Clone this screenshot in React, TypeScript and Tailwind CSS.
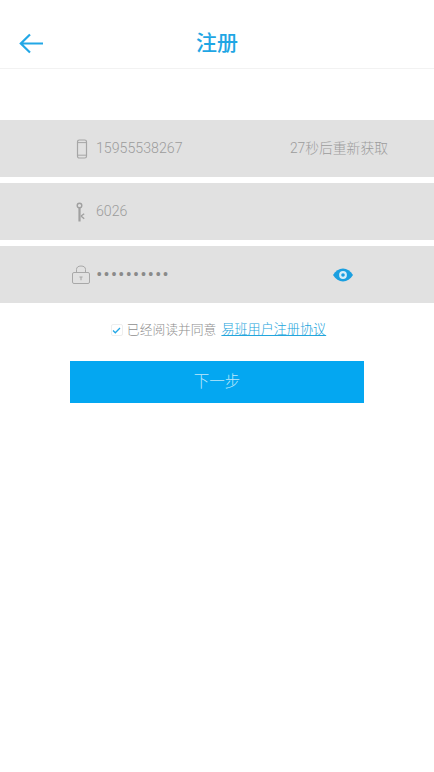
const font = { fontFamily: '"Roboto", "Noto Sans CJK SC", sans-serif' }

function PhoneIcon() {
  return (
    <svg className="ml-px" width="12" height="20" viewBox="0 0 12 20" fill="none" stroke="#a6a6a6">
      <rect x="1.500" y="1" width="9" height="18" rx="1.800" strokeWidth="1.200" />
      <path d="M1.500 3.600h9M1.500 16.200h9" strokeWidth="1" />
    </svg>
  )
}

function KeyIcon() {
  return (
    <svg width="10" height="20" viewBox="0 0 10 20" fill="none" stroke="#a0a0a0">
      <circle cx="3.500" cy="3.500" r="2.300" strokeWidth="1.400" />
      <path d="M3.500 6V19.500" strokeWidth="2.200" />
      <path d="M5 14l3.200-2.300M5 14l3.200 2.800" strokeWidth="1.400" />
    </svg>
  )
}

function LockIcon() {
  return (
    <svg width="18" height="19" viewBox="0 0 18 19" fill="none" stroke="#a8a8a8" strokeWidth="1">
      <path d="M4.500 7.500V4.500C4.500 2.400 6 1 9 1s4.500 1.400 4.500 3.500v3" />
      <rect x="0.500" y="7.500" width="17" height="11" rx="1.500" />
      <path d="M7.400 12h3.200M9 12v3.200" strokeWidth="1.100" />
    </svg>
  )
}

function EyeIcon() {
  return (
    <svg width="20" height="14" viewBox="0 0 20 14">
      <path d="M0 7C2.500 2.800 6 .5 10 .5S17.500 2.800 20 7c-2.500 4.200-6 6.500-10 6.500S2.500 11.200 0 7z" fill="#1a9fe0" />
      <circle cx="10" cy="7" r="3.900" fill="#d8edf8" />
      <circle cx="10" cy="7" r="1.800" fill="#1a9fe0" />
    </svg>
  )
}

function Row({ icon, children, right }: { icon: React.ReactNode; children: React.ReactNode; right?: React.ReactNode }) {
  return (
    <div className="flex h-[57px] items-center bg-[#e1e1e1]">
      <div className="flex w-[96px] shrink-0 justify-end pr-[6px]">
        <div className="flex w-[18px] justify-center">{icon}</div>
      </div>
      <div className="flex-1 text-[14.200px] font-light text-[#9c9c9c]">{children}</div>
      {right}
    </div>
  )
}

export default function App() {
  return (
    <div className="h-[772px] w-[434px] bg-white" style={font}>
      <header className="relative flex h-[69px] items-center justify-center border-b border-[#f2f2f2] pt-[19px]">
        <svg className="absolute left-[19px] top-[33px]" width="25" height="21" viewBox="0 0 25 21" fill="none" stroke="#22a7e6" strokeWidth="2.200">
          <path d="M24 10.500H2M11 1.500l-9.200 9 9.200 9" />
        </svg>
        <h1 className="text-[21px] font-medium leading-none text-[#1fa6e4]">注册</h1>
      </header>

      <div className="mt-[51px] flex flex-col gap-[6px]">
        <Row
          icon={<PhoneIcon />}
          right={<span className="pr-[46px] text-[13.800px] font-light text-[#9c9c9c]">27秒后重新获取</span>}
        >
          15955538267
        </Row>
        <Row icon={<KeyIcon />}>6026</Row>
        <Row
          icon={<LockIcon />}
          right={
            <span className="pr-[81px]">
              <EyeIcon />
            </span>
          }
        >
          <span className="block -translate-y-px text-[20px] leading-none tracking-[0.9px] text-[#8a8a8a]">••••••••••</span>
        </Row>
      </div>

      <div className="mt-[18px] flex items-center justify-center pl-[3px] text-[13px] leading-[18px] font-light">
        <span className="mr-[4px] flex h-[12px] w-[12px] items-center justify-center rounded-[2px] border border-[#eeeeee]">
          <svg width="9" height="7" viewBox="0 0 9 7" fill="none" stroke="#22a7e6" strokeWidth="1.300">
            <path d="M1 3.500l2.300 2.300L8 1" />
          </svg>
        </span>
        <span className="text-[12.800px] text-[#8f8f8f]">已经阅读并同意</span>
        <span className="ml-[5px] text-[13.100px] text-[#23a5dc] underline">易班用户注册协议</span>
      </div>

      <div className="mx-[70px] mt-[22px] flex h-[42px] items-center justify-center bg-[#04a7f1] pt-[2px] text-[15.500px] font-light text-[#bfe8fb]">
        下一步
      </div>
    </div>
  )
}
